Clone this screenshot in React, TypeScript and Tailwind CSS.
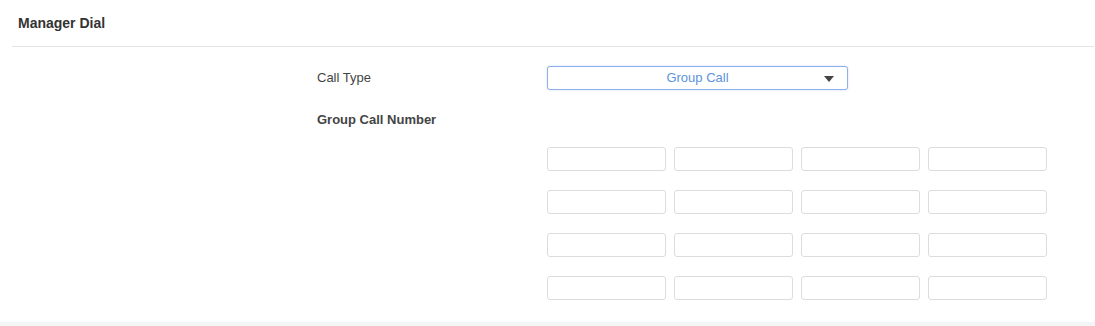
// Manager Dial — group call number settings panel

const ROWS = 4
const COLS = 4

export default function App() {
  const cells = Array.from({ length: ROWS * COLS }, (_, i) => i)

  return (
    <div className="w-[1095px] h-[326px] bg-[#f4f5f7] font-['Liberation_Sans',Arial,sans-serif] text-[13px] text-[#333]">
      <div className="h-[322px] bg-white">
        {/* ── header ── */}
        <div className="ml-[12px] mr-[1px] h-[47px] border-b border-[#e3e3e3] flex items-center pl-[6px] pt-[1px]">
          <span className="font-bold text-[14px] text-[#333]">Manager Dial</span>
        </div>

        {/* ── form ── */}
        <div className="pl-[317px] pt-[19px]">
          <div className="flex items-center h-[24px]">
            <div className="w-[230px] text-[#444]">Call Type</div>
            <div className="relative w-[301px] h-[24px] rounded-[3px] border border-[#8fb0ea] bg-white shadow-[0_0_2px_rgba(80,130,220,0.35)] flex items-center justify-center">
              <span className="text-[#5b93dc] text-[13px]">Group Call</span>
              <svg className="absolute right-[13px] top-[9px]" width="10" height="6" viewBox="0 0 10 6">
                <polygon points="0,0 10,0 5,6" fill="#444" />
              </svg>
            </div>
          </div>

          <div className="mt-[22px] h-[16px] flex items-center font-bold text-[#444]">Group Call Number</div>

          <div className="mt-[19px] ml-[230px] grid grid-cols-[repeat(4,119px)] gap-x-[8px] gap-y-[19px]">
            {cells.map((i) => (
              <div key={i} className="h-[24px] rounded-[3px] border border-[#dcdcdc] bg-white" />
            ))}
          </div>
        </div>
      </div>
    </div>
  )
}
